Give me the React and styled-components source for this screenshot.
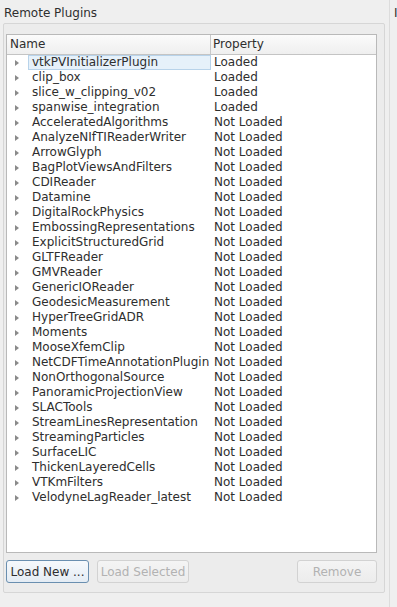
import React from 'react';
import styled, { createGlobalStyle } from 'styled-components';

const GlobalStyle = createGlobalStyle`
  html, body {
    margin: 0;
    padding: 0;
    background: #efefef;
    font-family: "DejaVu Sans", "Liberation Sans", sans-serif;
    font-size: 12px;
    color: #2e2e2e;
  }
`

const plugins = [
  ['vtkPVInitializerPlugin', 'Loaded'],
  ['clip_box', 'Loaded'],
  ['slice_w_clipping_v02', 'Loaded'],
  ['spanwise_integration', 'Loaded'],
  ['AcceleratedAlgorithms', 'Not Loaded'],
  ['AnalyzeNIfTIReaderWriter', 'Not Loaded'],
  ['ArrowGlyph', 'Not Loaded'],
  ['BagPlotViewsAndFilters', 'Not Loaded'],
  ['CDIReader', 'Not Loaded'],
  ['Datamine', 'Not Loaded'],
  ['DigitalRockPhysics', 'Not Loaded'],
  ['EmbossingRepresentations', 'Not Loaded'],
  ['ExplicitStructuredGrid', 'Not Loaded'],
  ['GLTFReader', 'Not Loaded'],
  ['GMVReader', 'Not Loaded'],
  ['GenericIOReader', 'Not Loaded'],
  ['GeodesicMeasurement', 'Not Loaded'],
  ['HyperTreeGridADR', 'Not Loaded'],
  ['Moments', 'Not Loaded'],
  ['MooseXfemClip', 'Not Loaded'],
  ['NetCDFTimeAnnotationPlugin', 'Not Loaded'],
  ['NonOrthogonalSource', 'Not Loaded'],
  ['PanoramicProjectionView', 'Not Loaded'],
  ['SLACTools', 'Not Loaded'],
  ['StreamLinesRepresentation', 'Not Loaded'],
  ['StreamingParticles', 'Not Loaded'],
  ['SurfaceLIC', 'Not Loaded'],
  ['ThickenLayeredCells', 'Not Loaded'],
  ['VTKmFilters', 'Not Loaded'],
  ['VelodyneLagReader_latest', 'Not Loaded'],
]

const Window = styled.div`
  display: flex;
  height: 607px;
  overflow: hidden;
`

const Panel = styled.div`
  width: 389px;
  padding: 6px 0 0 3px;
  box-sizing: border-box;
  display: flex;
  flex-direction: column;
`

const SidePanel = styled.div`
  flex: 1;
  border-left: 1px solid #dcdcdc;
  padding-top: 6px;
  padding-left: 4px;
  font-size: 12px;
  line-height: 14px;
  overflow: hidden;
`

const Title = styled.div`
  height: 17px;
  line-height: 15px;
  padding-left: 1px;
`

const Group = styled.div`
  width: 382px;
  height: 570px;
  border: 1px solid #d6d6d6;
  border-radius: 2px;
  background: #ececec;
  box-sizing: border-box;
  padding: 10px 7px 0 2px;
  display: flex;
  flex-direction: column;
`

const Table = styled.div`
  height: 519px;
  background: #ffffff;
  border: 1px solid #b9b9b9;
  box-sizing: border-box;
  display: flex;
  flex-direction: column;
`

const HeaderRow = styled.div`
  display: grid;
  grid-template-columns: 204px 1fr;
  height: 19px;
  background: linear-gradient(#fbfbfb, #efefef);
  border-bottom: 1px solid #c4c4c4;
`

const HeaderCell = styled.div`
  padding-left: ${p => p.$pad}px;
  line-height: 19px;
  border-right: ${p => (p.$divider ? '1px solid #c8c8c8' : 'none')};
`

const Row = styled.div`
  display: grid;
  grid-template-columns: 204px 1fr;
  height: 15px;
  line-height: 15px;
`

const NameCell = styled.div`
  display: flex;
  align-items: center;
  height: 15px;
`

const Arrow = styled.span`
  width: 0;
  height: 0;
  margin-left: 8px;
  margin-right: 9px;
  border-top: 3.5px solid transparent;
  border-bottom: 3.5px solid transparent;
  border-left: 4px solid #8a8a8a;
`

const NameText = styled.span`
  flex: 1;
  height: 15px;
  box-sizing: border-box;
  padding-left: 3px;
  white-space: nowrap;
  background: ${p => (p.$selected ? '#e6f1fa' : 'transparent')};
  border: 1px solid ${p => (p.$selected ? '#b8d3ea' : 'transparent')};
  line-height: 13px;
`

const PropCell = styled.div`
  padding-left: 3px;
  white-space: nowrap;
`

const ButtonBar = styled.div`
  display: flex;
  gap: 8px;
  margin-top: 7px;
`

const Button = styled.button`
  height: 23px;
  width: ${p => p.$width}px;
  font-family: inherit;
  font-size: 12px;
  padding: 0;
  border-radius: 3px;
  color: ${p => (p.$disabled ? '#b2b2b2' : '#2e2e2e')};
  border: 1px solid ${p => (p.$primary ? '#6a8fb0' : '#d2d2d2')};
  background: ${p => (p.$primary ? 'linear-gradient(#f6f9fc, #e4ecf4)' : 'linear-gradient(#f4f4f4, #ececec)')};
  margin-left: ${p => (p.$push ? 'auto' : '0')};
`

function App() {
  return (
    <Window>
      <GlobalStyle />
      <Panel>
        <Title>Remote Plugins</Title>
        <Group>
          <Table>
            <HeaderRow>
              <HeaderCell $pad={3} $divider>Name</HeaderCell>
              <HeaderCell $pad={2}>Property</HeaderCell>
            </HeaderRow>
            {plugins.map(([name, status], i) => (
              <Row key={name}>
                <NameCell>
                  <Arrow />
                  <NameText $selected={i === 0}>{name}</NameText>
                </NameCell>
                <PropCell>{status}</PropCell>
              </Row>
            ))}
          </Table>
          <ButtonBar>
            <Button $width={83} $primary>Load New ...</Button>
            <Button $width={92} $disabled>Load Selected</Button>
            <Button $width={80} $disabled $push>Remove</Button>
          </ButtonBar>
        </Group>
      </Panel>
      <SidePanel>I</SidePanel>
    </Window>
  )
}

export default App;
